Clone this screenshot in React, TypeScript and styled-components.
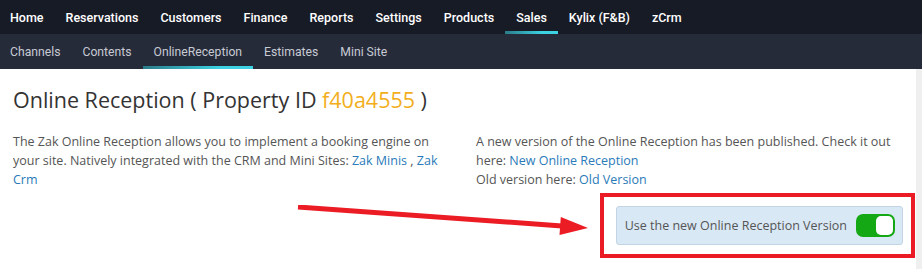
import { createGlobalStyle } from 'styled-components';
import styled from 'styled-components';

const GlobalStyle = createGlobalStyle`
  html, body {
    margin: 0;
    padding: 0;
    background: #fff;
  }
  body {
    font-family: 'Open Sans', 'Liberation Sans', sans-serif;
  }
`;

const mainItems = ['Home', 'Reservations', 'Customers', 'Finance', 'Reports', 'Settings', 'Products', 'Sales', 'Kylix (F&B)', 'zCrm'];
const subItems = ['Channels', 'Contents', 'OnlineReception', 'Estimates', 'Mini Site'];

const App = () => {
  return (
    <Page>
      <GlobalStyle />
      <MainNav>
        {mainItems.map((item) => (
          <NavItem key={item} $active={item === 'Sales'} $main>
            {item}
          </NavItem>
        ))}
      </MainNav>
      <SubNav>
        {subItems.map((item) => (
          <NavItem key={item} $active={item === 'OnlineReception'}>
            {item}
          </NavItem>
        ))}
      </SubNav>
      <Body>
        <Content>
          <Title>
            Online Reception ( Property ID <PropertyId>f40a4555</PropertyId> )
          </Title>
          <Columns>
            <Column>
              <Text>
                The Zak Online Reception allows you to implement a booking engine on your site. Natively integrated
                with the CRM and Mini Sites: <Link href="#">Zak Minis</Link> , <Link href="#">Zak Crm</Link>
              </Text>
            </Column>
            <Column>
              <Text>
                A new version of the Online Reception has been published. Check it out here:{' '}
                <Link href="#">New Online Reception</Link>
              </Text>
              <Text>
                Old version here: <Link href="#">Old Version</Link>
              </Text>
              <ToggleRow>
                <OptionBox>
                  <span>Use the new Online Reception Version</span>
                  <Switch $on>
                    <Knob />
                  </Switch>
                </OptionBox>
              </ToggleRow>
            </Column>
          </Columns>
          <Arrow width="300" height="40" viewBox="0 0 300 40">
            <line x1="2" y1="2" x2="266" y2="21" stroke="#ec1c24" strokeWidth="5" />
            <polygon points="292,23 263.5,30 264.8,12" fill="#ec1c24" />
          </Arrow>
        </Content>
        <ScrollTrack />
      </Body>
    </Page>
  );
};

const Page = styled.div`
  min-height: 100vh;
  display: flex;
  flex-direction: column;
`;

const MainNav = styled.nav`
  height: 34px;
  display: flex;
  align-items: stretch;
  background: #171b26;
  font-family: Roboto, 'Liberation Sans', sans-serif;
`;

const SubNav = styled(MainNav)`
  height: 35px;
  background: #262b3a;
`;

interface NavItemProps {
  $active?: boolean;
  $main?: boolean;
}

const NavItem = styled.a<NavItemProps>`
  position: relative;
  display: flex;
  align-items: center;
  padding: 0 11px;
  font-size: ${({ $main }) => ($main ? '12.5px' : '12.2px')};
  font-weight: ${({ $main }) => ($main ? 500 : 400)};
  color: ${({ $main }) => ($main ? '#ffffff' : '#c6cad3')};
  white-space: nowrap;
  cursor: pointer;

  &:first-child {
    padding-left: 10px;
  }

  &::after {
    content: '';
    display: ${({ $active }) => ($active ? 'block' : 'none')};
    position: absolute;
    left: 0;
    right: 0;
    bottom: 0;
    height: 3px;
    background: linear-gradient(90deg, #2b7b88, #3cd2e2 70%);
  }
`;

const Body = styled.div`
  flex: 1;
  display: flex;
`;

const Content = styled.main`
  position: relative;
  flex: 1;
  padding: 0 13px;
`;

const ScrollTrack = styled.div`
  width: 6px;
  background: #efefef;
`;

const Title = styled.h1`
  margin: 18px 0 19px;
  font-size: 21.5px;
  line-height: 26px;
  font-weight: 400;
  color: #333;
`;

const PropertyId = styled.span`
  color: #f2ae1c;
`;

const Columns = styled.div`
  display: grid;
  grid-template-columns: 1fr 1fr;
  column-gap: 36px;
`;

const Column = styled.div`
  display: flex;
  flex-direction: column;
`;

const Text = styled.p`
  margin: 0;
  font-size: 12.5px;
  line-height: 19px;
  color: #555;
`;

const Link = styled.a`
  color: #2a7ab8;
  text-decoration: none;
`;

const ToggleRow = styled.div`
  display: flex;
  justify-content: flex-end;
  margin-top: 17px;
`;

const OptionBox = styled.label`
  position: relative;
  box-sizing: border-box;
  height: 39px;
  display: flex;
  align-items: center;
  gap: 9px;
  padding: 0 7px 0 8px;
  background: #d9e8f5;
  border: 1px solid #c3d4e4;
  border-radius: 3px;
  font-size: 12.5px;
  color: #555;

  &::before {
    content: '';
    position: absolute;
    top: -14px;
    left: -17px;
    right: -13px;
    bottom: -14px;
    border: 4px solid #ea1b24;
    pointer-events: none;
  }
`;

const Switch = styled.span<{ $on?: boolean }>`
  box-sizing: border-box;
  width: 39px;
  height: 23px;
  display: flex;
  justify-content: ${({ $on }) => ($on ? 'flex-end' : 'flex-start')};
  padding: 2px;
  border-radius: 7px;
  background: ${({ $on }) => ($on ? '#14a814' : '#bbb')};
`;

const Knob = styled.span`
  width: 17px;
  height: 19px;
  border-radius: 5px;
  background: #fff;
`;

const Arrow = styled.svg`
  position: absolute;
  left: 296px;
  top: 136px;
  pointer-events: none;
`;

export default App;
